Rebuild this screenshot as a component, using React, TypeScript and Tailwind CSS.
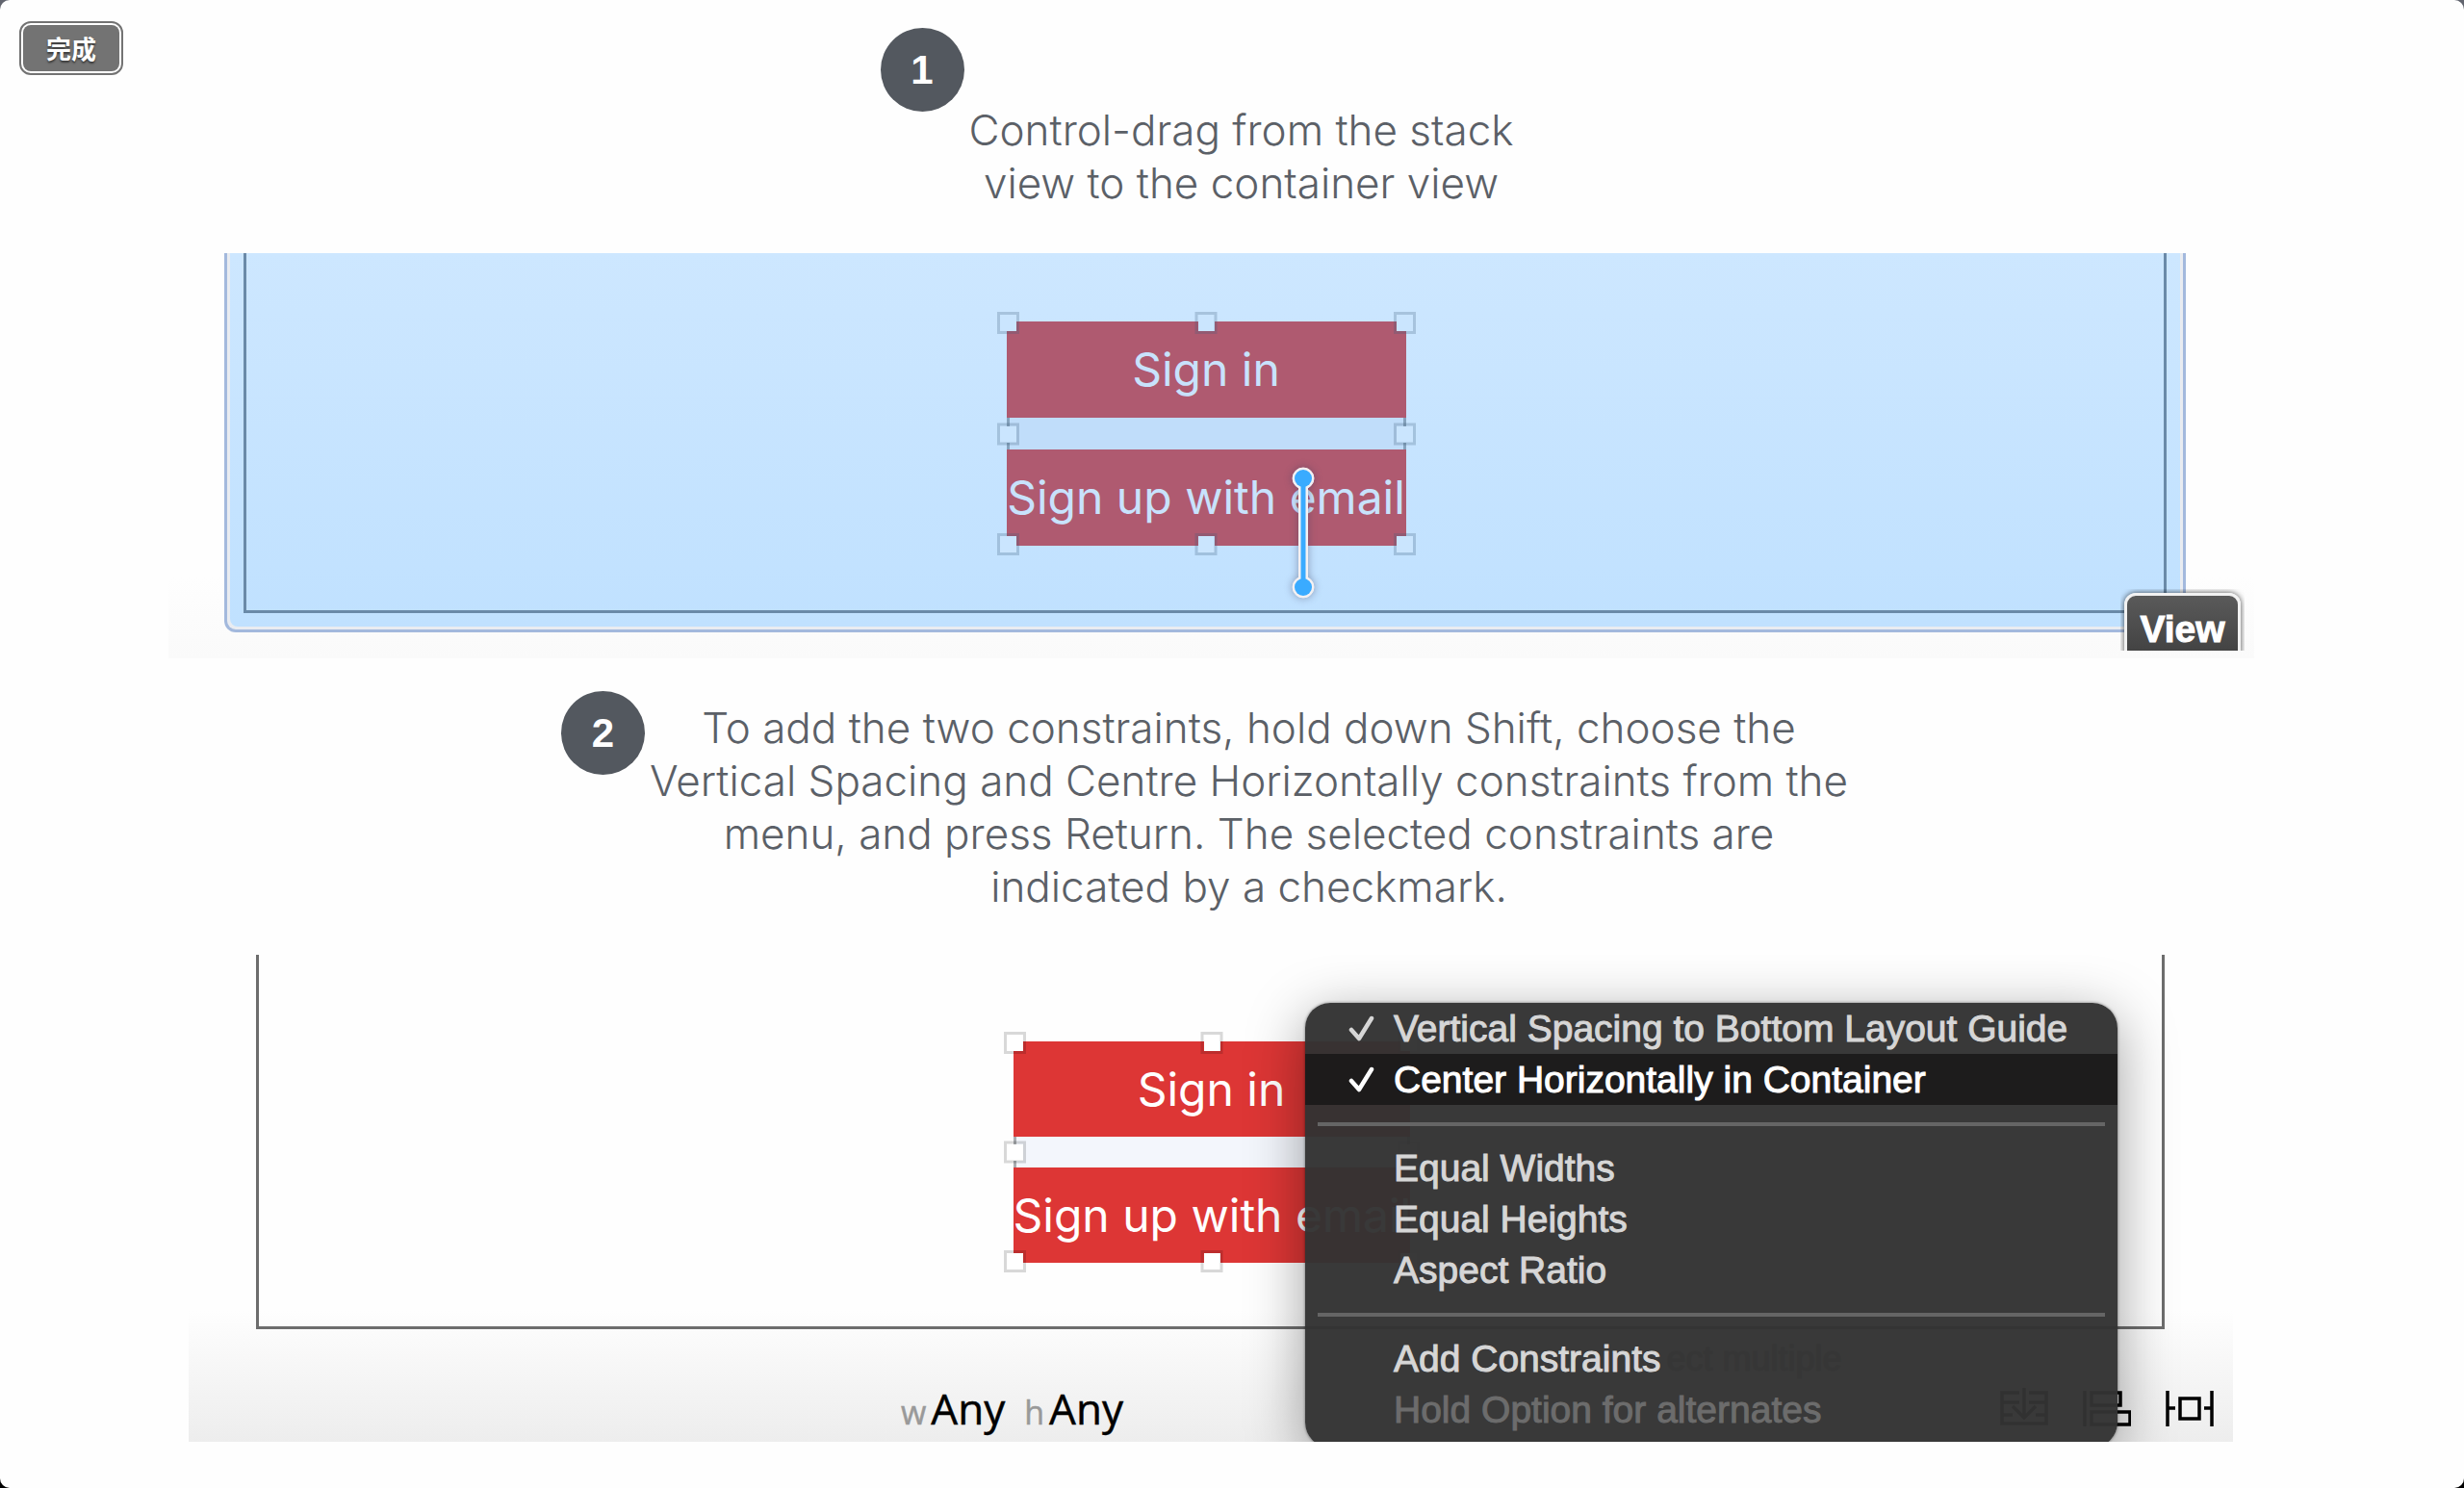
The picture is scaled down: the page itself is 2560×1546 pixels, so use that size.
import React from "react";

type Tone = "veiled" | "plain";

const handlePlaces = [
  "left-0 top-0",
  "left-1/2 top-0 -translate-x-1/2",
  "right-0 top-0",
  "left-0 top-1/2 -translate-y-1/2",
  "right-0 top-1/2 -translate-y-1/2",
  "left-0 bottom-0",
  "left-1/2 bottom-0 -translate-x-1/2",
  "right-0 bottom-0",
];

function StackSelection({ tone, children }: { tone: Tone; children?: React.ReactNode }) {
  const veiled = tone === "veiled";
  const button = veiled
    ? "block h-[100px] w-full whitespace-nowrap bg-[#af5a70] text-[#c8e2fc]"
    : "block h-[99px] w-full whitespace-nowrap bg-[#dd3635] text-white";
  return (
    <div className={veiled ? "relative ml-[2px] w-[415px]" : "relative ml-[2px] w-[412px]"}>
      <div className="font-['Inter'] text-[48px] leading-[56px]">
        <button type="button" className={button}>Sign in</button>
        <div
          className={
            veiled
              ? "h-[33px] border-x-[3px] border-[#86a3bd] bg-[#c0ddfa]"
              : "h-[32px] border-x-[3px] border-[#a9acb0] bg-[#f3f6fc]"
          }
        />
        <button type="button" className={button}>Sign up with email</button>
      </div>
      <div className="pointer-events-none absolute -inset-[10px]">
        {handlePlaces.map((place) => (
          <span
            key={place}
            className={`absolute size-[23px] border-[3px] bg-clip-padding ${place} ${
              veiled ? "border-[#3c5a78]/25 bg-[#cae5fe]" : "border-black/15 bg-white"
            }`}
          />
        ))}
      </div>
      {children}
    </div>
  );
}

function Step({ number, offset, children }: { number: number; offset: string; children: React.ReactNode }) {
  return (
    <div className="flex items-start justify-center gap-[5px]">
      <span className="flex size-[87px] shrink-0 items-center justify-center rounded-full bg-[#53585f] font-['Liberation_Sans'] text-[42px] font-bold text-white">
        {number}
      </span>
      <p className={`text-center font-['Inter'] text-[44px] font-light leading-[55px] text-[#5b6067] ${offset}`}>
        {children}
      </p>
    </div>
  );
}

function MenuItem({ label, state, ghost }: { label: string; state?: "checked" | "active" | "disabled"; ghost?: string }) {
  const look =
    state === "active"
      ? "bg-[#1b1a1a]/95 text-white"
      : state === "disabled"
        ? "text-[#6c6c6c]"
        : "text-[#d6d6d6]";
  return (
    <button
      type="button"
      role="menuitem"
      disabled={state === "disabled"}
      className={`flex h-[53px] w-full items-center whitespace-nowrap pl-[44px] text-left ${look}`}
    >
      <span className="w-[48px] shrink-0">
        {(state === "checked" || state === "active") && (
          <svg width="30" height="28" viewBox="0 0 30 28" fill="none" stroke="currentColor" strokeWidth="4.5" strokeLinecap="round" strokeLinejoin="round" aria-hidden="true">
            <path d="M4 15L12 24L25 3" />
          </svg>
        )}
      </span>
      <span>{label}</span>
      {ghost && <span className="ml-[6px] font-['Liberation_Sans'] text-[36px] text-[#363636]" aria-hidden="true">{ghost}</span>}
    </button>
  );
}

function MenuRule() {
  return <hr className="mx-[13px] mt-[18px] mb-[17px] h-[4px] border-0 bg-[#656565]" />;
}

function ConstraintMenu() {
  return (
    <div
      role="menu"
      className="absolute right-[120px] top-[50px] h-[462px] w-[844px] overflow-hidden rounded-[26px] bg-[#333333]/97 font-['Liberation_Sans'] text-[39px] leading-[53px] shadow-[0_14px_60px_rgba(0,0,0,0.38),0_0_3px_rgba(0,0,0,0.5)] [-webkit-text-stroke:1px_currentColor]"
    >
      <MenuItem label="Vertical Spacing to Bottom Layout Guide" state="checked" />
      <MenuItem label="Center Horizontally in Container" state="active" />
      <MenuRule />
      <MenuItem label="Equal Widths" />
      <MenuItem label="Equal Heights" />
      <MenuItem label="Aspect Ratio" />
      <MenuRule />
      <MenuItem label="Add Constraints" ghost="ect multiple" />
      <MenuItem label="Hold Option for alternates" state="disabled" />
    </div>
  );
}

function LayoutIcons() {
  return (
    <div className="flex gap-[36px] text-black">
      <button type="button" aria-label="Update frames">
        <svg width="50" height="42" viewBox="0 0 50 42" fill="none" stroke="currentColor" strokeWidth="3.5" className="block">
          <path d="M20 6H2V38H48V6H30M2 16H20M30 16H48M2 29H13M37 29H48M25 1V33M13 20L25 32L37 20" />
        </svg>
      </button>
      <button type="button" aria-label="Align">
        <svg width="50" height="42" viewBox="0 0 50 42" fill="none" stroke="currentColor" strokeWidth="3.5" className="block">
          <path d="M2 4V41M9 6H39V19H9ZM9 26H49V39H9Z" />
        </svg>
      </button>
      <button type="button" aria-label="Pin">
        <svg width="50" height="42" viewBox="0 0 50 42" fill="none" stroke="currentColor" strokeWidth="3.5" className="block">
          <path d="M2 4V41M48 4V41M2 22H10M40 22H48M15 12H35V33H15Z" />
        </svg>
      </button>
    </div>
  );
}

export default function App() {
  return (
    <div className="min-h-screen bg-linear-to-b from-[#62656f] to-black">
      <main className="relative flex min-h-screen flex-col rounded-[10px] bg-[#fefefe]">
        <button
          type="button"
          className="absolute left-[20px] top-[22px] h-[56px] w-[108px] rounded-[12px] border-2 border-[#737373] bg-white p-[2px]"
        >
          <span className="flex h-full items-center justify-center rounded-[8px] bg-[#737373] font-['Noto_Sans_CJK_SC',sans-serif] text-[26px] font-bold leading-none text-white [text-shadow:0_2px_2px_rgba(0,0,0,0.5)]">
            完成
          </span>
        </button>

        <section className="pt-[29px]">
          <div className="pr-[73px]">
            <Step number={1} offset="mt-[79px]">
              Control-drag from the stack
              <br />
              view to the container view
            </Step>
          </div>
          <figure className="relative ml-[175px] mr-[218px] mt-[45px] bg-linear-to-b from-[#fefefe] from-80% to-[#fafafa] pl-[58px] pr-[71px] pb-[27px]">
            <div className="rounded-b-[12px] border-x-[3px] border-b-[3px] border-[#a3b9dd] bg-[#e9ecf1] px-[3px] pb-[3px]">
              <div className="rounded-b-[8px] bg-linear-to-b from-[#cde7ff] to-[#c0e1ff] px-[14px] pb-[14px]">
                <div className="flex h-[374px] items-start justify-center border-x-[3px] border-b-[3px] border-[#6a8aa8] pt-[71px]">
                  <StackSelection tone="veiled">
                    <svg width="40" height="152" viewBox="0 0 40 152" className="absolute left-[288px] top-[144px] drop-shadow-[0_0_4px_rgba(60,60,90,0.45)]" aria-hidden="true">
                      <g stroke="#f4f1f3" fill="#f4f1f3">
                        <path d="M20 19V132" strokeWidth="10" />
                        <circle cx="20" cy="19" r="11" />
                        <circle cx="20" cy="132" r="11" />
                      </g>
                      <path d="M20 19V132" strokeWidth="5" stroke="#3aabff" />
                      <circle cx="20" cy="19" r="9" fill="#3aabff" />
                      <circle cx="20" cy="132" r="9" fill="#3aabff" />
                    </svg>
                  </StackSelection>
                </div>
              </div>
            </div>
            <div className="absolute bottom-[8px] right-[10px] h-[64px] w-[129px] overflow-hidden px-[4px] pt-[4px]">
              <div className="h-[72px] rounded-[12px] border-[3px] border-[#f2f2f2] bg-linear-to-b from-[#5a5a5a] to-[#404040] pt-[13px] text-center font-['Liberation_Sans'] text-[39px] font-bold leading-[44px] text-white shadow-[0_0_6px_rgba(0,0,0,0.7)] [-webkit-text-stroke:1px_currentColor]">
                View
              </div>
            </div>
          </figure>
        </section>

        <section className="pt-[34px]">
          <div className="pr-[57px]">
            <Step number={2} offset="mt-[11px]">
              To add the two constraints, hold down Shift, choose the
              <br />
              Vertical Spacing and Centre Horizontally constraints from the
              <br />
              menu, and press Return. The selected constraints are
              <br />
              indicated by a checkmark.
            </Step>
          </div>
          <figure className="relative ml-[196px] mr-[240px] mt-[43px] overflow-hidden bg-linear-to-b from-[#fefefe] from-73% to-[#ededed]">
            <div className="ml-[70px] mr-[71px] flex h-[389px] items-start justify-center border-x-[3px] border-b-[3px] border-[#6d6d6d] pt-[90px]">
              <StackSelection tone="plain" />
            </div>
            <div className="flex h-[117px] items-start justify-between pl-[740px] pr-[20px] pt-[60px]">
              <div className="-mt-[2px] flex items-baseline font-['Open_Sans'] text-[44px] leading-[48px] text-black [-webkit-text-stroke:0.5px_currentColor]">
                <span className="mr-[5px] text-[34px] text-[#999999]">w</span>
                <span>Any</span>
                <span className="ml-[20px] mr-[5px] text-[34px] text-[#999999]">h</span>
                <span>Any</span>
              </div>
              <LayoutIcons />
            </div>
            <ConstraintMenu />
          </figure>
        </section>
      </main>
    </div>
  );
}
